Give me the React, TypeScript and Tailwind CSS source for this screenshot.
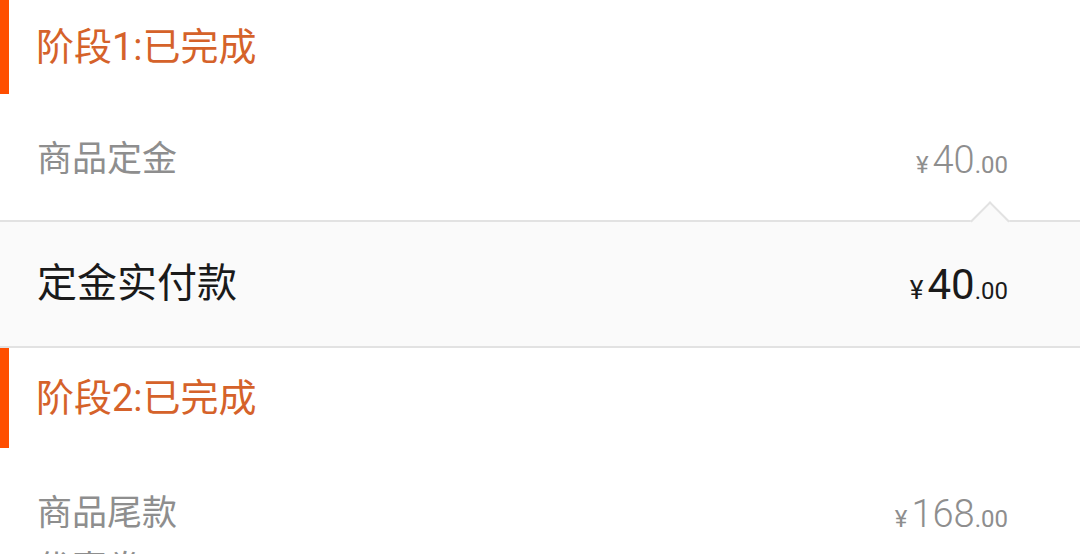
import React from "react";

type Row = { label: string; yuan: string; cents: string; tone?: "orange" };

function Price({
  yuan,
  cents,
  size,
  color,
}: {
  yuan: string;
  cents: string;
  size: "md" | "lg";
  color: string;
}) {
  return (
    <div className={`flex items-baseline ${color}`}>
      <span className={size === "lg" ? "text-[26px] mr-[4px]" : "text-[24px] mr-[4px]"}>¥</span>
      <span className={size === "lg" ? "text-[42px]" : "text-[38px] font-light"}>{yuan}</span>
      <span className="text-[24px]">.{cents}</span>
    </div>
  );
}

function StageHeader({ title, height }: { title: string; height: string }) {
  return (
    <div className={`flex items-stretch bg-white ${height}`}>
      <div className="w-[9px] bg-[#ff4e00]" />
      <div className="flex items-center pl-[27px] text-[38px] text-[#d5622a]">{title}</div>
    </div>
  );
}

function ItemRow({ label, yuan, cents, tone }: Row) {
  return (
    <div className="flex items-center justify-between h-[56px] pl-[37px] pr-[72px]">
      <span className="text-[35px] text-[#8e8e8e]">{label}</span>
      <Price
        yuan={yuan}
        cents={cents}
        size="md"
        color={tone === "orange" ? "text-[#e0642a]" : "text-[#8e8e8e]"}
      />
    </div>
  );
}

export default function App() {
  return (
    <div
      className="w-[1080px] h-[554px] overflow-hidden bg-white"
      style={{ fontFamily: "Roboto, 'Noto Sans CJK SC', sans-serif" }}
    >
      <StageHeader title="阶段1:已完成" height="h-[94px]" />
      <div className="pt-[38px] pb-[32px]">
        <ItemRow label="商品定金" yuan="40" cents="00" />
      </div>
      <div className="relative bg-[#fafafa] border-t-2 border-b-2 border-[#e2e2e2] h-[128px] flex items-center justify-between pl-[37px] pr-[72px]">
        <div className="absolute right-[76px] top-[-15px] w-[28px] h-[28px] rotate-45 bg-[#fafafa] border-l-2 border-t-2 border-[#e2e2e2]" />
        <span className="text-[40px] text-[#1a1a1a]">定金实付款</span>
        <Price yuan="40" cents="00" size="lg" color="text-[#1a1a1a]" />
      </div>
      <StageHeader title="阶段2:已完成" height="h-[100px]" />
      <div className="pt-[38px]">
        <ItemRow label="商品尾款" yuan="168" cents="00" />
        <ItemRow label="优惠券" yuan="20" cents="00" tone="orange" />
      </div>
    </div>
  );
}
